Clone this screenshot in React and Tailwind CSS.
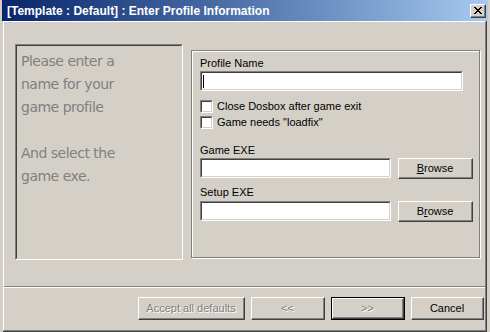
import React from 'react';

function classNames(...classes) {
  return classes.filter(Boolean).join(' ');
}

// classic raised push button
const WinButton = ({ children, className, disabled, isDefault }) => (
  <div className={classNames('h-[23px]', isDefault && 'border border-black', className)}>
    <div className="h-full border border-t-white border-l-white border-r-[#404040] border-b-[#404040]">
      <div
        className={classNames(
          'h-full flex items-center justify-center border-r border-b border-[#808080]',
          disabled ? 'text-[#808080] [text-shadow:1px_1px_0_#ffffff]' : 'text-black'
        )}
      >
        {children}
      </div>
    </div>
  </div>
);

const Sunken = ({ children, className }) => (
  <div className={classNames('border border-t-[#808080] border-l-[#808080] border-r-white border-b-white', className)}>
    <div className="h-full border border-t-[#404040] border-l-[#404040] border-r-[#d4d0c8] border-b-[#d4d0c8] bg-white flex items-center">
      {children}
    </div>
  </div>
);

const CheckRow = ({ label, className }) => (
  <div className={classNames('flex items-center h-[13px]', className)}>
    <Sunken className="w-[13px] h-[13px]" />
    <span className="ml-[4px] leading-[13px]">{label}</span>
  </div>
);

const CloseX = () => (
  <svg width="8" height="7" viewBox="0 0 8 7" shapeRendering="crispEdges">
    <path
      d="M0 0h2v1H0zM6 0h2v1H6zM1 1h2v1H1zM5 1h2v1H5zM2 2h4v1H2zM3 3h2v1H3zM2 4h4v1H2zM1 5h2v1H1zM5 5h2v1H5zM0 6h2v1H0zM6 6h2v1H6z"
      fill="#000"
    />
  </svg>
);

export default function App() {
  return (
    <div className="w-[490px] h-[332px] bg-[#d4d0c8] overflow-hidden font-['Liberation_Sans',Arial,sans-serif] text-[11px] text-black">
      {/* title bar */}
      <div className="mx-[2px] h-[21px] flex items-center bg-gradient-to-r from-[#0a246a] to-[#a6caf0] pl-[5px] pr-[2px]">
        <span className="flex-1 text-white font-bold text-[12px] leading-none">
          [Template : Default] : Enter Profile Information
        </span>
        <div className="w-[16px] h-[14px] border border-t-white border-l-white border-r-[#404040] border-b-[#404040]">
          <div className="h-full flex items-center justify-center border-r border-b border-[#808080] bg-[#d4d0c8]">
            <CloseX />
          </div>
        </div>
      </div>

      {/* client panel */}
      <div className="ml-[3px] w-[484px] h-[311px] border-r border-b border-[#404040]">
        <div className="h-full border-t border-l border-t-white border-l-white border-r border-b border-r-[#808080] border-b-[#808080]">
          <div className="flex h-[264px]">
            <div className="ml-[11px] mt-[22px] w-[168px] h-[216px] border border-t-[#808080] border-l-[#808080] border-r-white border-b-white">
              <div className="h-full border border-t-[#404040] border-l-[#404040] border-r-[#d4d0c8] border-b-[#d4d0c8] pl-[4px] pt-[4px] font-['DejaVu_Sans',sans-serif] text-[14px] leading-[23px] tracking-[-0.5px] text-[#808080]">
                Please enter a
                <br />
                name for your
                <br />
                game profile
                <br />
                <br />
                And select the
                <br />
                game exe.
              </div>
            </div>

            <div className="ml-[8px] mt-[28px] w-[289px] h-[208px] border border-[#808080] shadow-[inset_1px_1px_0_#ffffff,1px_1px_0_#ffffff] pl-[8px]">
              <div className="mt-[6px] leading-[13px]">Profile Name</div>
              <Sunken className="mt-[1px] w-[263px] h-[20px]">
                <div className="ml-[1px] w-[1px] h-[13px] bg-black" />
              </Sunken>

              <CheckRow className="mt-[9px]" label="Close Dosbox after game exit" />
              <CheckRow className="mt-[3px]" label={'Game needs "loadfix"'} />

              <div className="mt-[15px] leading-[13px]">Game EXE</div>
              <div className="mt-[1px] flex items-start">
                <Sunken className="w-[191px] h-[20px]" />
                <WinButton className="ml-[7px] w-[75px] !h-[21px]">
                  <span>
                    <span className="underline">B</span>rowse
                  </span>
                </WinButton>
              </div>

              <div className="mt-[7px] leading-[13px]">Setup EXE</div>
              <div className="mt-[2px] flex items-start">
                <Sunken className="w-[191px] h-[20px]" />
                <WinButton className="ml-[7px] w-[75px] !h-[21px]">
                  <span>
                    B<span className="underline">r</span>owse
                  </span>
                </WinButton>
              </div>
            </div>
          </div>

          {/* separator */}
          <div className="h-[2px] border-t border-t-[#808080] border-b border-b-white" />

          <div className="mt-[9px] flex">
            <WinButton className="ml-[134px] w-[107px]" disabled>
              Accept all defaults
            </WinButton>
            <WinButton className="ml-[6px] w-[74px]" disabled>
              &lt;&lt;
            </WinButton>
            <WinButton className="ml-[6px] w-[74px]" disabled isDefault>
              &gt;&gt;
            </WinButton>
            <WinButton className="ml-[6px] w-[73px]">Cancel</WinButton>
          </div>
        </div>
      </div>
    </div>
  );
}
